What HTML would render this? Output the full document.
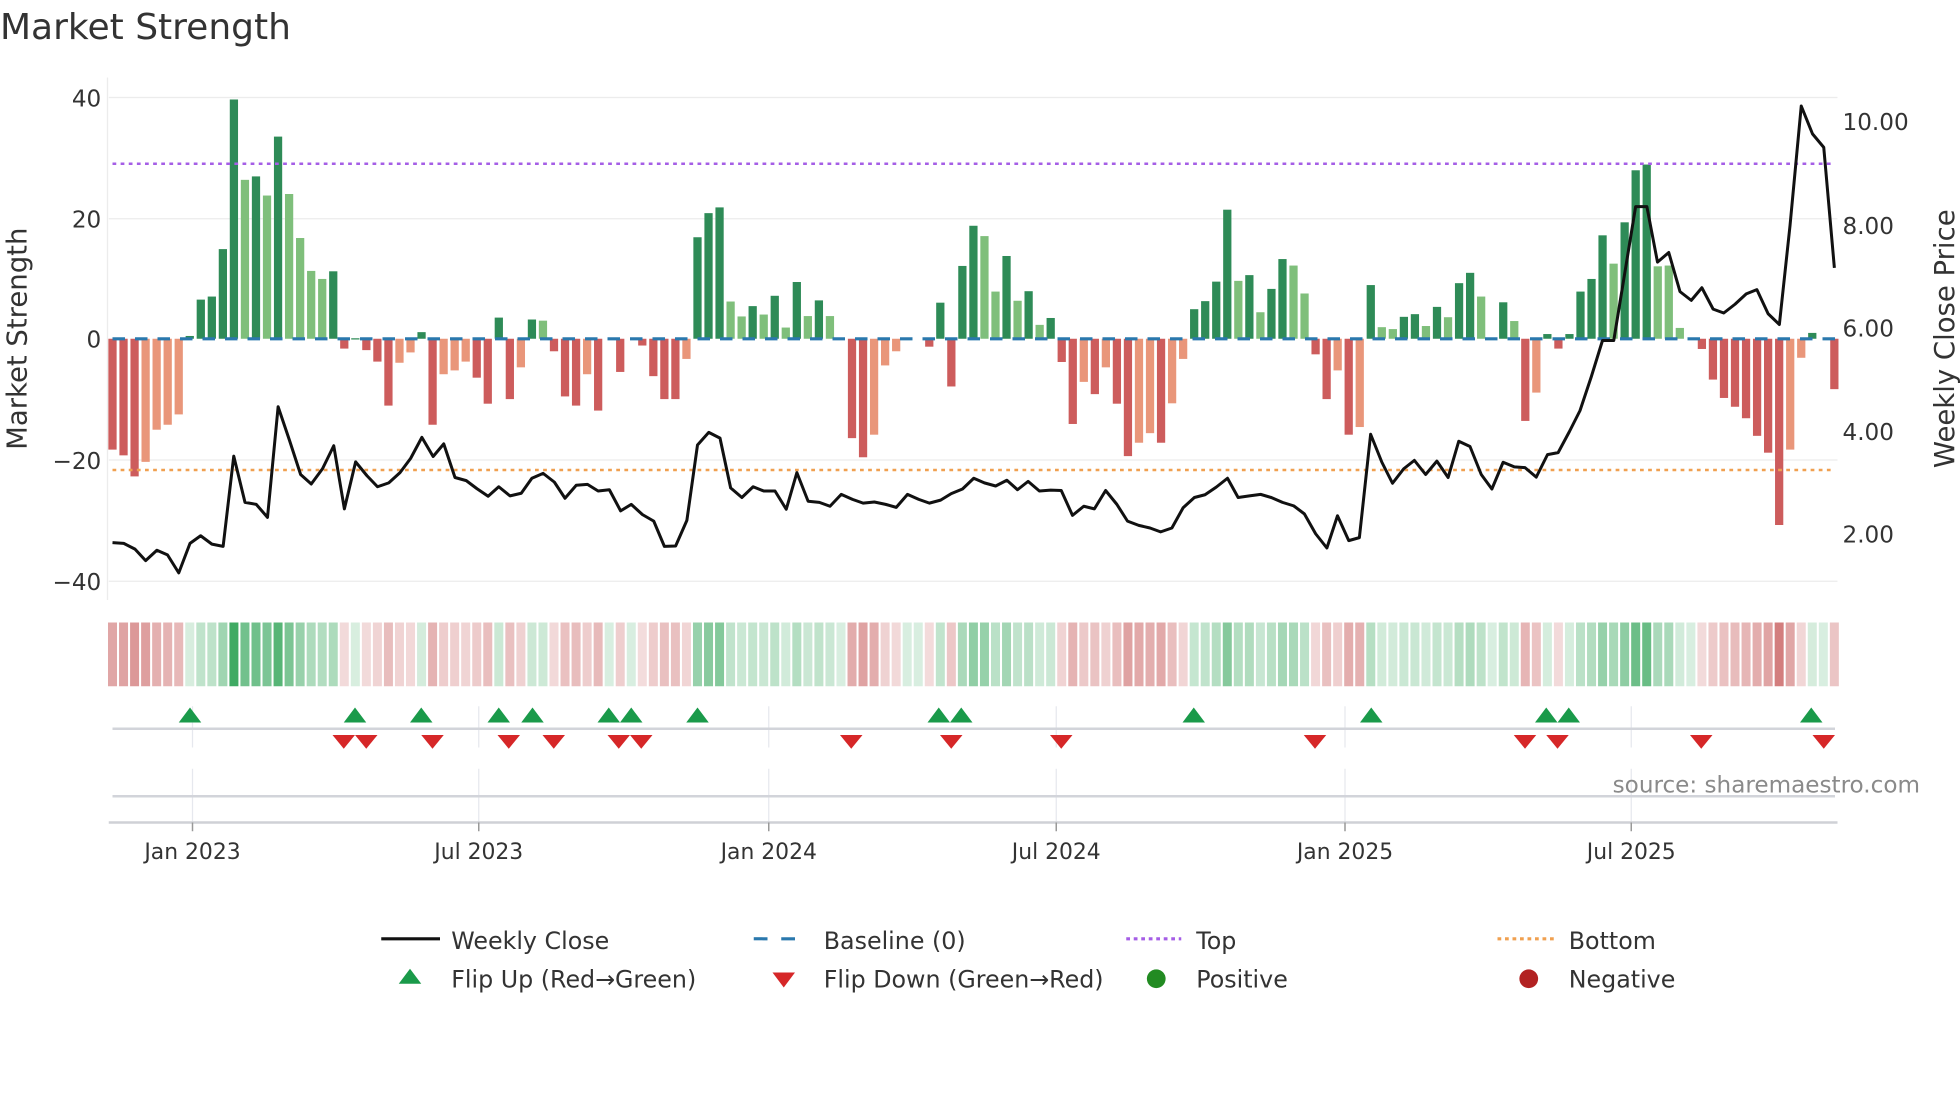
<!DOCTYPE html>
<html><head><meta charset="utf-8"><style>
html,body{margin:0;padding:0;background:#fff;width:1960px;height:1102px;overflow:hidden}
svg{display:block}
text{font-family:"DejaVu Sans","Liberation Sans",sans-serif;fill:#333}
</style></head><body>
<svg id="s" width="1960" height="1102" viewBox="0 0 1568 881.6" xmlns="http://www.w3.org/2000/svg">
<text x="0" y="31" font-size="28.8" fill="#333">Market Strength</text>
<g stroke="#ececec" stroke-width="1">
<line x1="87" y1="78" x2="1470" y2="78"/><line x1="87" y1="175" x2="1470" y2="175"/>
<line x1="87" y1="368" x2="1470" y2="368"/><line x1="87" y1="465" x2="1470" y2="465"/>
<line x1="86" y1="62" x2="86" y2="480"/>
</g>
<g font-size="18.5" text-anchor="end">
<text x="81" y="85">40</text><text x="81" y="182">20</text><text x="81" y="278">0</text>
<text x="81" y="375">−20</text><text x="81" y="472">−40</text>
</g>
<g font-size="18.5">
<text x="1474" y="104">10.00</text><text x="1474" y="187">8.00</text><text x="1474" y="269">6.00</text>
<text x="1474" y="352">4.00</text><text x="1474" y="434">2.00</text>
</g>
<text transform="translate(21,271) rotate(-90)" font-size="22" text-anchor="middle">Market Strength</text>
<text transform="translate(1563,271) rotate(-90)" font-size="22" text-anchor="middle">Weekly Close Price</text>
<g id="bars"></g>
<line x1="90" y1="131" x2="1468" y2="131" stroke="#a55ee6" stroke-width="2" stroke-dasharray="3,3.5"/>
<line x1="90" y1="376" x2="1468" y2="376" stroke="#f0a050" stroke-width="2" stroke-dasharray="3,3.5"/>
<line x1="90" y1="271" x2="1468" y2="271" stroke="#2a78ad" stroke-width="2.5" stroke-dasharray="10,8"/>
<polyline id="ln" fill="none" stroke="#111" stroke-width="2.4" stroke-linejoin="round"/>
<g id="heat"></g>
<g stroke="#e6e8ee" stroke-width="1">
<line x1="154" y1="565" x2="154" y2="598"/><line x1="383" y1="565" x2="383" y2="598"/><line x1="615" y1="565" x2="615" y2="598"/><line x1="845" y1="565" x2="845" y2="598"/><line x1="1076" y1="565" x2="1076" y2="598"/><line x1="1305" y1="565" x2="1305" y2="598"/>
<line x1="154" y1="615" x2="154" y2="658"/><line x1="383" y1="615" x2="383" y2="658"/><line x1="615" y1="615" x2="615" y2="658"/><line x1="845" y1="615" x2="845" y2="658"/><line x1="1076" y1="615" x2="1076" y2="658"/><line x1="1305" y1="615" x2="1305" y2="658"/>
</g>
<line x1="90" y1="583" x2="1468" y2="583" stroke="#d2d4da" stroke-width="2"/>
<line x1="90" y1="637" x2="1468" y2="637" stroke="#d2d4da" stroke-width="2"/>
<line x1="87" y1="658" x2="1470" y2="658" stroke="#cfd1d6" stroke-width="2"/>
<g stroke="#999" stroke-width="1.2">
<line x1="154" y1="658" x2="154" y2="665"/><line x1="383" y1="658" x2="383" y2="665"/><line x1="615" y1="658" x2="615" y2="665"/><line x1="845" y1="658" x2="845" y2="665"/><line x1="1076" y1="658" x2="1076" y2="665"/><line x1="1305" y1="658" x2="1305" y2="665"/>
</g>
<g id="tri"></g>
<g font-size="17.5" text-anchor="middle">
<text x="154" y="687">Jan 2023</text><text x="383" y="687">Jul 2023</text><text x="615" y="687">Jan 2024</text>
<text x="845" y="687">Jul 2024</text><text x="1076" y="687">Jan 2025</text><text x="1305" y="687">Jul 2025</text>
</g>
<text x="1536" y="634" font-size="18.5" text-anchor="end" style="fill:#8a8a8a">source: sharemaestro.com</text>
<g font-size="19">
<line x1="305" y1="751" x2="352" y2="751" stroke="#111" stroke-width="2.5"/>
<text x="361" y="759">Weekly Close</text>
<line x1="603" y1="751" x2="647" y2="751" stroke="#2a78ad" stroke-width="2.5" stroke-dasharray="11,11"/>
<text x="659" y="759">Baseline (0)</text>
<line x1="901" y1="751" x2="945" y2="751" stroke="#a55ee6" stroke-width="2.5" stroke-dasharray="3,3"/>
<text x="957" y="759">Top</text>
<line x1="1198" y1="751" x2="1243" y2="751" stroke="#f0a050" stroke-width="2.5" stroke-dasharray="3,3"/>
<text x="1255" y="759">Bottom</text>
<polygon points="328,775 337,787 319,787" fill="#1a9a4a"/>
<text x="361" y="790">Flip Up (Red→Green)</text>
<polygon points="618,778 636,778 627,790" fill="#d62728"/>
<text x="659" y="790">Flip Down (Green→Red)</text>
<circle cx="925" cy="783" r="7.5" fill="#228b22"/>
<text x="957" y="790">Positive</text>
<circle cx="1223" cy="783" r="7.5" fill="#b22222"/>
<text x="1255" y="790">Negative</text>
</g>
</svg>
<script>
var z1="r1175,r1190,r1245,s1207,s1123,s1110,s1083,d878,d783,d775,d651,d260,l470,d461,l511,d357,l507,l622,l708,l729,d709,r911,d884,r915,r945,r1060,s948,s921,d868,r1110,s978,s968,s945,r987,r1055,d830,r1043,s960,d835,l838,r918,r1036,r1060,s978,r1073,n,r972,n,r903,r983,r1043,r1043,s938,d620,d557,d542,l788,l827,d800,l822,d773,l856,d737,l826,d785,l826,n,r1145,r1195,s1136,s955,s918,n,n,r906,d791,r1010,d695,d590,l617,l762,d669,l786,d761,l849,d831,r946,r1108,s998,r1030,s960,r1055,r1192,s1157,s1132,r1157,s1054,s938,d808,d787,d736,d548,l734,d719,l816,d755,d677,l694,l767,r926,r1043,s968,r1136,s1116,d745,l855,l860,d828,d821,l852,d802,l829,d740,d713,l775,n,d790,l839,r1100,s1026,d873,r911,d873,d762,d729,d615,l689,d581,d445,d430,l696,l694,l857,n,r912,r992,r1040,r1063,r1093,r1139,r1183,r1372,s1175,s935,d870,n,r1017".split(",");
var col={d:"#2e8b57",l:"#7fbf7b",r:"#cd5c5c",s:"#e9967a"};
var K=0.30612,NS="http://www.w3.org/2000/svg";
function el(t,a,p){var e=document.createElementNS(NS,t);for(var k in a)e.setAttribute(k,a[k]);p.appendChild(e);return e;}
var B=document.getElementById("bars"),H=document.getElementById("heat");
for(var i=0;i<z1.length;i++){
 var c=z1[i][0],x=90+8.83*i,v=0;
 if(c!="n"){var y=+z1[i].slice(1)*K;var y0=Math.min(y,271),h=Math.abs(y-271);
  el("rect",{x:x-3.3,y:y0,width:6.6,height:Math.max(h,1),fill:col[c]},B);
  v=(271-y)/4.83;}
 var t=0.18+0.72*Math.min(Math.abs(v)/40,1),f;
 if(v>=0)f="rgb("+Math.round(255-t*215)+","+Math.round(255-t*95)+","+Math.round(255-t*175)+")";
 else f="rgb("+Math.round(255-t*60)+","+Math.round(255-t*175)+","+Math.round(255-t*175)+")";
 el("rect",{x:x-3.6,y:498,width:7.2,height:51,fill:f},H);
}
var L1=[[180,1418],[198,1420],[216,1435],[233,1465],[251,1438],[268,1450],[286,1497],[304,1420],[321,1400],[339,1422],[357,1428],[374,1192],[392,1313],[410,1318],[428,1352],[445,1063],[463,1150],[481,1240],[498,1265],[516,1225],[534,1165],[551,1330],[569,1207],[587,1243],[604,1272],[622,1262],[640,1235],[657,1198],[675,1143],[693,1193],[710,1160],[728,1248],[746,1256],[763,1277],[781,1297],[798,1272],[816,1296],[834,1289],[851,1250],[869,1237],[887,1260],[904,1302],[922,1268],[940,1266],[957,1283],[975,1280],[993,1335],[1010,1318],[1028,1345],[1046,1362],[1063,1428],[1081,1427],[1099,1360],[1116,1163],[1134,1130],[1152,1145],[1169,1275],[1187,1300],[1205,1272],[1222,1283],[1240,1283],[1258,1331],[1275,1235],[1293,1310],[1311,1313],[1328,1323],[1346,1292],[1364,1305],[1381,1315],[1399,1312],[1417,1318],[1434,1326],[1452,1292],[1470,1305],[1487,1315],[1505,1307],[1522,1290],[1540,1278],[1558,1250]];
var L2=[[7,1262],[25,1270],[43,1255],[60,1280],[77,1258],[95,1283],[113,1281],[130,1282],[148,1347],[166,1323],[183,1330],[201,1282],[219,1318],[236,1362],[254,1373],[272,1380],[289,1390],[307,1380],[325,1327],[343,1300],[360,1293],[378,1273],[396,1250],[413,1300],[431,1296],[449,1292],[466,1300],[484,1313],[502,1322],[519,1343],[537,1395],[555,1432],[572,1348],[590,1413],[607,1405],[625,1135],[643,1208],[660,1263],[678,1225],[695,1203],[713,1240],[731,1205],[749,1248],[766,1153],[784,1167],[802,1240],[819,1278],[837,1208],[855,1220],[872,1222],[890,1247],[908,1188],[925,1183],[943,1128],[960,1073],[978,985],[996,890],[1014,890],[1031,720],[1049,540],[1067,540],[1084,685],[1102,660],[1120,762],[1138,785],[1155,752],[1173,808],[1190,818],[1208,795],[1226,768],[1243,757],[1261,820],[1279,848],[1296,590],[1314,277],[1332,350],[1350,385],[1367,700]];
var pts=[];L1.forEach(function(p){pts.push((p[0]*0.5).toFixed(1)+","+(p[1]*K).toFixed(1));});
L2.forEach(function(p){pts.push((784+p[0]*0.5).toFixed(1)+","+(p[1]*K).toFixed(1));});
document.getElementById("ln").setAttribute("points",pts.join(" "));
var T=document.getElementById("tri");
[152,284,337,399,426,487,505,558,751,769,955,1097,1237,1255,1449].forEach(function(x){el("polygon",{points:x+",566 "+(x+9)+",578 "+(x-9)+",578",fill:"#1a9a4a"},T);});
[275,293,346,407,443,495,513,681,761,849,1052,1220,1246,1361,1459].forEach(function(x){el("polygon",{points:(x-9)+",588 "+(x+9)+",588 "+x+",599",fill:"#d62728"},T);});
</script>
</body></html>
